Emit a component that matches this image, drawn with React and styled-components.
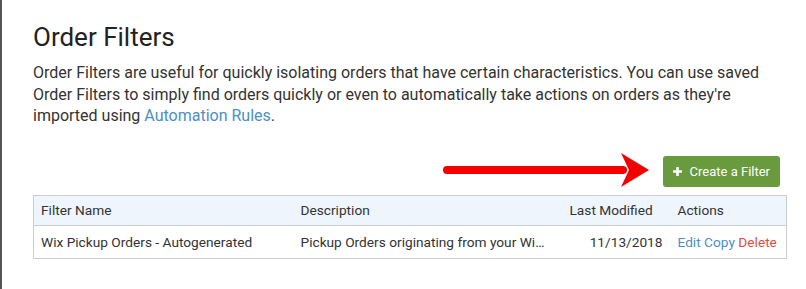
import React from "react";
import styled, { createGlobalStyle } from "styled-components";

const GlobalStyle = createGlobalStyle`
  html, body {
    margin: 0;
    padding: 0;
    background: #fff;
  }
  body {
    font-family: Roboto, "Liberation Sans", Arial, sans-serif;
    color: #333;
  }
`;

const Page = styled.div`
  min-height: 100vh;
  box-sizing: border-box;
  border-left: 2px solid #555;
  padding: 21px 19px 0 31px;
`;

const Title = styled.h1`
  margin: 0;
  font-size: 26px;
  font-weight: 400;
  line-height: 32px;
  color: #222;
`;

const Intro = styled.p`
  margin: 9px 0 0;
  font-size: 16px;
  line-height: 21.5px;
  color: #333;
`;

const Link = styled.a`
  color: ${p => p.danger ? "#e5483c" : "#4b8fc7"};
  text-decoration: none;
  cursor: pointer;
`;

const Toolbar = styled.div`
  display: flex;
  justify-content: flex-end;
  align-items: center;
  gap: 14px;
  height: 31px;
  margin-top: 29px;
  padding-right: 7px;
`;

const Button = styled.button`
  display: flex;
  align-items: center;
  gap: 7px;
  height: 31px;
  padding: 0 10px 0 9px;
  border: none;
  border-radius: 3px;
  background: #6a9a3e;
  color: #fff;
  font-family: inherit;
  font-size: 13px;
  cursor: pointer;
`;

const Table = styled.table`
  width: 100%;
  margin-top: 8px;
  border-collapse: collapse;
  table-layout: fixed;
  border: 1px solid #ccc;
  font-size: 13.7px;
`;

const Th = styled.th`
  height: 29px;
  padding: 0 7px;
  background: #eef5fc;
  border-bottom: 1px solid #ccc;
  text-align: left;
  font-weight: 400;
  color: #333;
`;

const Td = styled.td`
  height: 32px;
  padding: 0 ${p => p.right ? "8px" : p.clip ? "12px" : "7px"} 0 7px;
  text-align: ${p => p.right ? "right" : "left"};
  white-space: nowrap;
  overflow: hidden;
  text-overflow: ellipsis;
  color: #333;
`;

const ActionsCell = styled.td`
  height: 32px;
  padding: 0 0 0 7px;
  white-space: nowrap;
`;

const Arrow = () => (
  <svg width="206" height="36" viewBox="0 0 206 36" style={{ flexShrink: 0 }}>
    <line x1="4" y1="17" x2="180" y2="17" stroke="#f40000" strokeWidth="8" strokeLinecap="round" />
    <polygon points="178,0 206,17 178,34 186,17" fill="#f40000" />
  </svg>
);

const Plus = () => (
  <svg width="11" height="11" viewBox="0 0 11 11">
    <path d="M5.5 1v9M1 5.5h9" stroke="#fff" strokeWidth="2.6" />
  </svg>
);

export default function App() {
  return (
    <>
      <GlobalStyle />
      <Page>
        <Title>Order Filters</Title>
        <Intro>
          Order Filters are useful for quickly isolating orders that have certain characteristics. You can use saved
          Order Filters to simply find orders quickly or even to automatically take actions on orders as they're
          imported using <Link>Automation Rules</Link>.
        </Intro>
        <Toolbar>
          <Arrow />
          <Button>
            <Plus />
            Create a Filter
          </Button>
        </Toolbar>
        <Table>
          <colgroup>
            <col style={{ width: "260px" }} />
            <col style={{ width: "269px" }} />
            <col style={{ width: "108px" }} />
            <col />
          </colgroup>
          <thead>
            <tr>
              <Th>Filter Name</Th>
              <Th>Description</Th>
              <Th>Last Modified</Th>
              <Th>Actions</Th>
            </tr>
          </thead>
          <tbody>
            <tr>
              <Td>Wix Pickup Orders - Autogenerated</Td>
              <Td clip>Pickup Orders originating from your Wix store</Td>
              <Td right>11/13/2018</Td>
              <ActionsCell>
                <Link>Edit</Link> <Link>Copy</Link> <Link danger>Delete</Link>
              </ActionsCell>
            </tr>
          </tbody>
        </Table>
      </Page>
    </>
  );
}
